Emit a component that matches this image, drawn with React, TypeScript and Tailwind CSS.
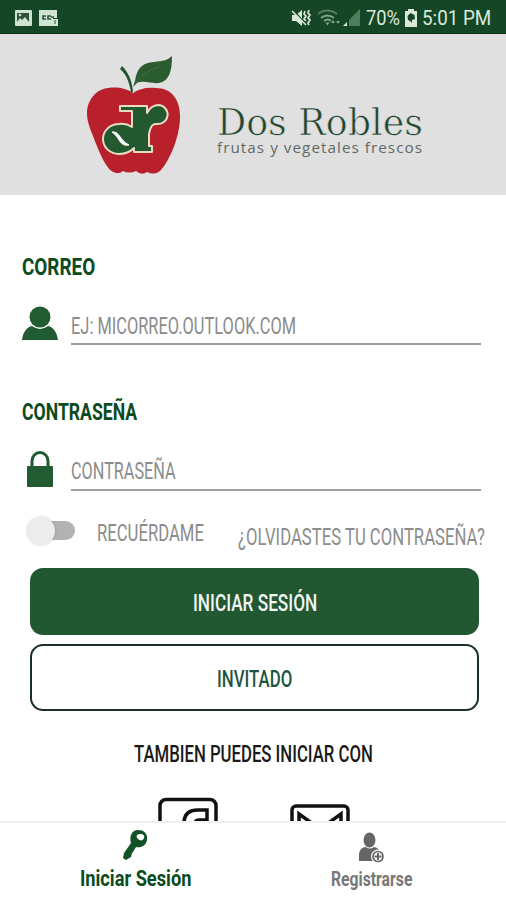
import { useLayoutEffect, useRef, useState } from "react";
import clsx from "clsx";

type FitTextProps = {
  children: string;
  className?: string;
};

// squeezes one line of text to the width of its box
function FitText({ children, className }: FitTextProps) {
  const box = useRef<HTMLSpanElement>(null);
  const text = useRef<HTMLSpanElement>(null);
  const [scale, setScale] = useState(1);

  useLayoutEffect(() => {
    if (box.current && text.current) {
      setScale(box.current.offsetWidth / text.current.offsetWidth);
    }
  }, [children]);

  return (
    <span
      ref={box}
      className={clsx("block shrink-0 whitespace-nowrap leading-none", className)}
    >
      <span
        ref={text}
        className="inline-block origin-left align-top"
        style={{ transform: `scaleX(${scale})` }}
      >
        {children}
      </span>
    </span>
  );
}

function StatusBar() {
  return (
    <div className="flex h-[34px] shrink-0 items-center border-b border-[#0c2c17] bg-[#154626] pt-[2px] pr-[15px] pl-[14px] text-[#dbe8dc]">
      <svg className="h-[18px] w-[18px]" viewBox="0 0 18 18">
        <rect x="1" y="1" width="17" height="16" rx="1" fill="#cfe3d2" />
        <path d="M3 4h12v9l-4-5-3 3-2-2-3 4z" fill="#2b5438" />
        <circle cx="6" cy="6" r="1.3" fill="#cfe3d2" />
      </svg>
      <svg className="ml-[6px] h-[18px] w-[22px]" viewBox="0 0 22 18">
        <path d="M1 1h18v8h-4v8H1z" fill="#cfe3d2" />
        <path
          d="M8 7H5v3h3M13 7h-3v3h3M13 8h3"
          fill="none"
          stroke="#2b5438"
          strokeWidth="1.6"
        />
        <rect x="15" y="10" width="5" height="7" fill="#cfe3d2" />
        <path d="M17 11v4" stroke="#2b5438" />
      </svg>

      <svg className="ml-auto h-[18px] w-[20px]" viewBox="0 0 20 18">
        <path d="M1 6h4l6-5v16l-6-5H1z" fill="#dbe8dc" />
        <path d="M3 2l13 14" stroke="#154626" strokeWidth="1.5" />
        <path d="M1 2l14 14" stroke="#dbe8dc" strokeWidth="1.6" />
        <path
          d="M14 2l-1 3 2 2-2 3 2 2M18 1l-1 3 2 2-2 3 2 2-2 3 1 2"
          fill="none"
          stroke="#dbe8dc"
          strokeWidth="1.7"
        />
      </svg>
      <svg
        className="ml-[7px] h-[18px] w-[23px]"
        viewBox="0 0 23 18"
        fill="none"
        stroke="#83a78b"
        strokeWidth="1.8"
      >
        <path d="M0 5Q9-2 19 5" opacity=".6" />
        <path d="M3 9q6-5 13 0M6 12q4-3 7 0" />
        <path d="M7.5 13.5h4l-2 3z" fill="#83a78b" stroke="none" />
        <path d="M13 14l2-3 2 3zM18 12l2 3 2-3z" fill="#83a78b" stroke="none" />
      </svg>
      <svg className="ml-[2px] h-[18px] w-[17px]" viewBox="0 0 17 18">
        <path d="M17 0v17H6V11z" fill="#4f7c5c" />
        <path d="M4 13v4H0z" fill="#dbe8dc" />
      </svg>
      <FitText className="ml-[6px] w-[34px] pt-px font-[Roboto] text-[21px]">70%</FitText>
      <svg className="ml-[4px] h-[18px] w-[14px]" viewBox="0 0 14 18">
        <path d="M4 0h6v2h3v16H1V2h3z" fill="#dbe8dc" />
        <path d="M3.500 7l3-3 4 2 .5 4-3 1v3l-2-2-2-1z" fill="#154626" />
      </svg>
      <FitText className="ml-[4px] w-[69px] pt-px font-[Roboto] text-[21px]">5:01 PM</FitText>
    </div>
  );
}

function AppleLogo() {
  return (
    <svg className="h-[122px] w-[96px]" viewBox="0 0 96 122">
      <path
        d="M47 37C38 30 18 29 9 38C-2 49 0 63 5 75C11 90 16 105 24 114Q31 120 37 115Q43 118 50 115Q56 120 61 116Q69 120 75 114C84 104 94 80 94 61C94 44 86 32 70 32C60 31 53 33 47 37Z"
        fill="#b8202c"
      />
      <path d="M36 10c6 6 10 14 11 26h-2C43 25 40 18 34 13z" fill="#21552f" />
      <path
        d="M49 25C51 12 56 7 68 6c9-1 14-2 18-6c0 16-3 25-13 27c-8 1-14-3-22 0l-4 4z"
        fill="#2a5c2f"
      />
      <path d="M50 26Q59 15 73 11" fill="none" stroke="#41713f" />
      {/* joined "dr" monogram */}
      <path
        d="M34 50H61V57Q65 49 73 49A10 9.500 0 1 1 70 68Q65 67 63 78V90H66V96H48V92Q42 98 33 98A16 15 0 0 1 33 68Q40 67 46 71V55H34Z"
        fill="#23592f"
        stroke="#e9dcc4"
        strokeWidth="2"
        strokeLinejoin="round"
      />
      <path
        d="M26 76c8-1 7 8 17 13c-10 2-9-8-17-13z"
        fill="#fff"
        stroke="#fff"
        strokeWidth="1"
      />
    </svg>
  );
}

function Header() {
  return (
    <header className="flex h-[161px] shrink-0 bg-[#e0e0e0] pt-[22px] pl-[86px]">
      <AppleLogo />
      <div className="ml-[35px] pt-[47px]">
        <FitText className="h-[37px] w-[206px] font-['DejaVu_Serif'] text-[38px] text-[#21472f] [-webkit-text-stroke:0.700px_#e0e0e0]">
          Dos Robles
        </FitText>
        <FitText className="w-[206px] font-['Open_Sans'] text-[15px] tracking-[1px] text-[#5f6b63]">
          frutas y vegetales frescos
        </FitText>
      </div>
    </header>
  );
}

function PersonIcon() {
  return (
    <svg className="h-[35px] w-[36px]" viewBox="0 0 36 35" fill="#205b31">
      <circle cx="18" cy="11" r="10.500" />
      <path d="M0 34C1 26 5 21 10 20Q18 26 26 20C31 21 35 26 36 34z" />
    </svg>
  );
}

function LockIcon() {
  return (
    <svg className="h-[37px] w-[36px]" viewBox="0 0 36 37">
      <path
        d="M10 16V10a8 8.500 0 0 1 16 0v6"
        fill="none"
        stroke="#205b31"
        strokeWidth="3"
      />
      <rect x="5" y="15" width="26" height="21" rx="1" fill="#205b31" />
    </svg>
  );
}

function Form() {
  return (
    <main className="flex min-h-0 flex-1 flex-col overflow-hidden bg-white pt-[61px] font-[Roboto]">
      <FitText className="ml-[22px] h-[23px] w-[73px] text-[23px] font-bold text-[#0c4a20]">
        CORREO
      </FitText>
      <div className="mt-[27px] flex h-[39px] shrink-0 pl-[22px]">
        <PersonIcon />
        <div className="ml-[13px] w-[410px] border-b-2 border-[#a0a0a0] pt-[8px]">
          <FitText className="w-[225px] text-[24px] text-[#8c8c8c]">
            EJ: MICORREO.OUTLOOK.COM
          </FitText>
        </div>
      </div>

      <FitText className="mt-[56px] ml-[22px] h-[23px] w-[115px] text-[23px] font-bold text-[#0c4a20]">
        CONTRASEÑA
      </FitText>
      <div className="mt-[27px] flex h-[40px] shrink-0 pl-[22px]">
        <LockIcon />
        <div className="ml-[13px] w-[410px] border-b-2 border-[#a0a0a0] pt-[8px]">
          <FitText className="w-[105px] text-[24px] text-[#8c8c8c]">CONTRASEÑA</FitText>
        </div>
      </div>

      <div className="mt-[25px] flex h-[29px] shrink-0 items-center pl-[27px]">
        <div className="flex h-[19px] w-[48px] items-center rounded-full bg-[#b2b2b2]">
          <div className="size-[28px] shrink-0 rounded-full bg-[#ececec] shadow-[0_0_3px_rgba(0,0,0,0.18)]" />
        </div>
        <FitText className="mt-[5px] ml-[22px] w-[107px] text-[24px] text-[#8c8c8c]">
          RECUÉRDAME
        </FitText>
        <FitText className="mt-[12px] ml-[34px] w-[247px] text-[24px] text-[#8c8c8c]">
          ¿OLVIDASTES TU CONTRASEÑA?
        </FitText>
      </div>

      <button className="mx-[30px] mt-[23px] flex h-[67px] w-[449px] shrink-0 items-center justify-center rounded-[13px] bg-[#215832]">
        <FitText className="mt-[3px] w-[124px] text-[24px] font-medium text-[#f1f6f2]">
          INICIAR SESIÓN
        </FitText>
      </button>
      <button className="mx-[30px] mt-[9px] flex h-[67px] w-[449px] shrink-0 items-center justify-center rounded-[13px] border-2 border-[#1c3029] bg-white">
        <FitText className="mt-[3px] w-[75px] text-[24px] font-medium text-[#1f5540]">
          INVITADO
        </FitText>
      </button>

      <FitText className="mt-[31px] ml-[134px] h-[24px] w-[239px] text-[24px] font-medium text-[#1a1a1a]">
        TAMBIEN PUEDES INICIAR CON
      </FitText>
      <div className="mt-[31px] flex h-[60px] shrink-0 pl-[158px]">
        <svg
          className="h-[60px] w-[60px]"
          viewBox="0 0 60 60"
          fill="none"
          stroke="#111"
          strokeWidth="3.500"
        >
          <rect x="2" y="2.500" width="56" height="56" rx="6" />
          <path d="M26 58V26c0-9 5-13 14-13h9v10h-8c-3 0-4 1-4 4v31" />
        </svg>
        <svg
          className="mt-[7px] ml-[72px] h-[46px] w-[60px]"
          viewBox="0 0 60 46"
          fill="none"
          stroke="#111"
          strokeWidth="3.500"
        >
          <rect x="2" y="2" width="56" height="42" rx="4" />
          <path d="M9 38V10l21 15 21-15v28" />
        </svg>
      </div>
    </main>
  );
}

function BottomNav() {
  return (
    <nav className="flex h-[79px] shrink-0 border-t-2 border-[#f1f1f1] bg-white font-[Roboto]">
      <div className="flex w-[270px] flex-col items-center pt-[7px]">
        <svg className="h-[30px] w-[26px]" viewBox="0 0 26 30">
          <path
            fillRule="evenodd"
            fill="#145028"
            d="M16 0c7 0 10 5 9 10c-1 6-6 8-11 7l-3 5-1 1-1 4-5 3-3-2 1-5L9 13C7 6 10 0 16 0zm2 4c-4 0-4 3-2 5s5 2 6-1-1-4-4-4z"
          />
        </svg>
        <FitText className="mt-[8px] w-[111px] text-[22px] font-bold text-[#0c4a20]">
          Iniciar Sesión
        </FitText>
      </div>
      <div className="flex w-[203px] flex-col items-center pt-[9px]">
        <svg className="h-[31px] w-[27px]" viewBox="0 0 27 31">
          <ellipse cx="11.500" cy="8" rx="6" ry="7.500" fill="#666" />
          <path d="M1 29V22q1-7 7-7q4 3 8 0q6 1 6 7v7z" fill="#666" />
          <circle cx="20" cy="24.500" r="7" fill="#fff" />
          <circle cx="20" cy="24.500" r="5" fill="#fff" stroke="#666" strokeWidth="1.700" />
          <path d="M20 21v7M16.500 24.500h7" stroke="#666" strokeWidth="2" />
        </svg>
        <FitText className="mt-[6px] w-[81px] text-[20px] font-bold text-[#777]">
          Registrarse
        </FitText>
      </div>
    </nav>
  );
}

export default function App() {
  return (
    <div className="flex h-[900px] w-[506px] flex-col overflow-hidden bg-white">
      <StatusBar />
      <Header />
      <Form />
      <BottomNav />
    </div>
  );
}
